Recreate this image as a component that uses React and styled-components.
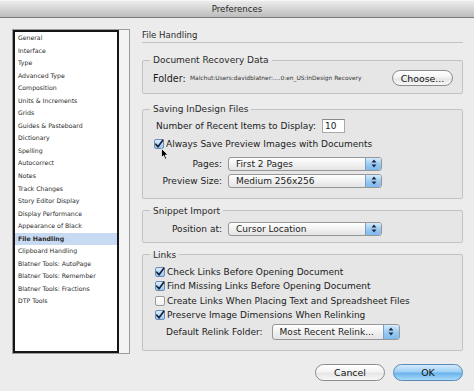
import React from "react";
import styled, { createGlobalStyle } from "styled-components";

const GlobalStyle = createGlobalStyle`
  html, body { margin: 0; padding: 0; background: #ececec; }
  body { font-family: "DejaVu Sans", "Liberation Sans", sans-serif; }
`;

const panes = [
  "General", "Interface", "Type", "Advanced Type", "Composition",
  "Units & Increments", "Grids", "Guides & Pasteboard", "Dictionary",
  "Spelling", "Autocorrect", "Notes", "Track Changes", "Story Editor Display",
  "Display Performance", "Appearance of Black", "File Handling",
  "Clipboard Handling", "Blatner Tools: AutoPage", "Blatner Tools: Remember",
  "Blatner Tools: Fractions", "DTP Tools",
];

export default function App() {
  return (
    <Window>
      <GlobalStyle />
      <TitleBar>Preferences</TitleBar>
      <Body>
        <ListFrame>
          <PaneList>
            {panes.map((p) => (
              <PaneItem key={p} $active={p === "File Handling"}>{p}</PaneItem>
            ))}
          </PaneList>
        </ListFrame>

        <Main>
          <Heading>File Handling</Heading>

          <Group $pt={4} $pb={7}>
            <Legend>Document Recovery Data</Legend>
            <FolderRow>
              <FolderLabel>Folder:</FolderLabel>
              <PathText>Malchut:Users:davidblatner:....0:en_US:InDesign Recovery</PathText>
              <PushButton $w={61} $h={16}>Choose...</PushButton>
            </FolderRow>
          </Group>

          <Group $pt={4} $pb={10} $mt={3}>
            <Legend>Saving InDesign Files</Legend>
            <InlineRow $pl={13} $gap={6}>
              Number of Recent Items to Display:
              <NumberField>10</NumberField>
            </InlineRow>
            <CheckRow $pl={11} $mt={5}>
              <CheckBox checked cursor />
              Always Save Preview Images with Documents
            </CheckRow>
            <FormRow $mt={6}>
              <RightLabel>Pages:</RightLabel>
              <Popup w={154} value="First 2 Pages" />
            </FormRow>
            <FormRow $mt={3}>
              <RightLabel>Preview Size:</RightLabel>
              <Popup w={154} value="Medium 256x256" />
            </FormRow>
          </Group>

          <Group $pt={5} $pb={6}>
            <Legend>Snippet Import</Legend>
            <FormRow>
              <RightLabel>Position at:</RightLabel>
              <Popup w={154} value="Cursor Location" />
            </FormRow>
          </Group>

          <Group $pt={5} $pb={10}>
            <Legend>Links</Legend>
            <CheckRow $pl={12}><CheckBox checked />Check Links Before Opening Document</CheckRow>
            <CheckRow $pl={12} $mt={2}><CheckBox checked />Find Missing Links Before Opening Document</CheckRow>
            <CheckRow $pl={12} $mt={2}><CheckBox />Create Links When Placing Text and Spreadsheet Files</CheckRow>
            <CheckRow $pl={12} $mt={2}><CheckBox checked />Preserve Image Dimensions When Relinking</CheckRow>
            <InlineRow $pl={23} $mt={2} $gap={9}>
              Default Relink Folder:
              <Popup w={128} h={16} value="Most Recent Relink..." />
            </InlineRow>
          </Group>

          <ButtonRow>
            <PushButton $w={70} $h={17}>Cancel</PushButton>
            <PushButton $w={70} $h={17} $default>OK</PushButton>
          </ButtonRow>
        </Main>
      </Body>
    </Window>
  );
}

function CheckBox({ checked, cursor }) {
  return (
    <Box $checked={checked}>
      {checked && (
        <svg width="10" height="10" viewBox="0 0 10 10">
          <path d="M1.8 5.2 L4 7.8 L8.8 1.2" fill="none" stroke="#15233d" strokeWidth="1.7" strokeLinecap="round" strokeLinejoin="round" />
        </svg>
      )}
      {cursor && (
        <Cursor width="8" height="12" viewBox="0 0 8 12">
          <path d="M0.5 0.5 L0.5 9.5 L2.6 7.6 L4.2 11.2 L5.6 10.5 L4.1 7 L7 7 Z" fill="#000" stroke="#fff" strokeWidth="0.7" />
        </Cursor>
      )}
    </Box>
  );
}

function Popup({ w, h = 14, value }) {
  return (
    <PopupBox style={{ width: w, height: h }}>
      <PopupValue>{value}</PopupValue>
      <Stepper>
        <svg width="6" height="9" viewBox="0 0 6 9">
          <path d="M3 0.5 L5.5 3.5 L0.5 3.5 Z M3 8.5 L5.5 5.5 L0.5 5.5 Z" fill="#1d2c44" />
        </svg>
      </Stepper>
    </PopupBox>
  );
}

const Window = styled.div`
  width: 474px;
  height: 391px;
  display: flex;
  flex-direction: column;
  background: #ececec;
  color: #1b1b1b;
  overflow: hidden;
`;

const TitleBar = styled.div`
  height: 18px;
  box-sizing: border-box;
  line-height: 17px;
  text-align: center;
  font-size: 8.6px;
  color: #262626;
  background: linear-gradient(#ececec, #d0d0d0 60%, #bcbcbc);
  border-top: 1px solid #f6f6f6;
  border-bottom: 1px solid #7c7c7c;
`;

const Body = styled.div`
  display: flex;
  gap: 12px;
  padding: 11px 11px 0 12px;
`;

const ListFrame = styled.div`
  width: 118px;
  height: 325px;
  box-sizing: border-box;
  border: 1px solid #9c9c9c;
  background: #f4f4f4;
  display: flex;
`;

const PaneList = styled.div`
  width: 106px;
  height: 100%;
  box-sizing: border-box;
  border: 2px solid #151515;
  background: #fff;
`;

const PaneItem = styled.div`
  height: 12.55px;
  line-height: 12.55px;
  padding-left: 3px;
  font-size: 6.2px;
  white-space: nowrap;
  color: #2a2a2a;
  font-weight: ${(p) => (p.$active ? "bold" : "normal")};
  background: ${(p) => (p.$active ? "#c7daf1" : "transparent")};
`;

const Main = styled.div`
  width: 321px;
  display: flex;
  flex-direction: column;
`;

const Heading = styled.div`
  height: 13px;
  line-height: 13px;
  font-size: 8.6px;
  color: #2a2a2a;
  border-bottom: 1px solid #c3c3c3;
  margin-bottom: 11px;
`;

const Group = styled.fieldset`
  margin: ${(p) => p.$mt ?? 0}px 0 6px 0;
  padding: ${(p) => p.$pt}px 0 ${(p) => p.$pb}px 0;
  border: 1px solid #c2c2c2;
  border-radius: 2px;
  background: #e6e6e6;
  min-width: 0;
  font-size: 9px;
`;

const Legend = styled.legend`
  margin-left: 7px;
  padding: 0 3px;
  font-size: 9px;
  line-height: 12px;
  color: #2a2a2a;
`;

const FolderRow = styled.div`
  display: flex;
  align-items: center;
  height: 16px;
  padding: 0 9px 0 10px;
`;

const FolderLabel = styled.span`
  font-size: 9.6px;
  width: 37px;
`;

const PathText = styled.span`
  flex: 1;
  font-size: 5.9px;
  color: #333;
  white-space: nowrap;
`;

const InlineRow = styled.div`
  display: flex;
  align-items: center;
  gap: ${(p) => p.$gap ?? 3}px;
  padding-left: ${(p) => p.$pl}px;
  margin-top: ${(p) => p.$mt ?? 0}px;
  min-height: 14px;
  white-space: nowrap;
`;

const NumberField = styled.span`
  display: inline-flex;
  align-items: center;
  width: 23px;
  height: 14px;
  box-sizing: border-box;
  padding-left: 2px;
  background: #fff;
  border: 1px solid #a8a8a8;
  border-top-color: #8a8a8a;
`;

const CheckRow = styled.div`
  display: flex;
  align-items: center;
  gap: 2px;
  height: 12.5px;
  padding-left: ${(p) => p.$pl}px;
  margin-top: ${(p) => p.$mt ?? 0}px;
  white-space: nowrap;
`;

const Box = styled.span`
  position: relative;
  width: 10px;
  height: 10px;
  box-sizing: border-box;
  border: 1px solid ${(p) => (p.$checked ? "#6a8db5" : "#9a9a9a")};
  border-radius: 2px;
  background: ${(p) =>
    p.$checked ? "linear-gradient(#dcecfb, #9cc8ef)" : "linear-gradient(#ffffff, #efefef)"};
  display: flex;
  align-items: center;
  justify-content: center;
  flex-shrink: 0;
  svg { overflow: visible; }
`;

const Cursor = styled.svg`
  position: absolute;
  left: 6px;
  top: 8px;
`;

const FormRow = styled.div`
  display: grid;
  grid-template-columns: 79px auto;
  column-gap: 6px;
  align-items: center;
  margin-top: ${(p) => p.$mt ?? 0}px;
`;

const RightLabel = styled.span`
  text-align: right;
  white-space: nowrap;
`;

const PopupBox = styled.div`
  display: flex;
  box-sizing: border-box;
  border: 1px solid #979797;
  border-radius: 3px;
  background: linear-gradient(#ffffff, #f1f1f1 50%, #e4e4e4);
  overflow: hidden;
`;

const PopupValue = styled.span`
  flex: 1;
  display: flex;
  align-items: center;
  padding-left: 7px;
  white-space: nowrap;
`;

const Stepper = styled.span`
  width: 15px;
  display: flex;
  align-items: center;
  justify-content: center;
  border-left: 1px solid #7d9fc6;
  background: linear-gradient(#d6ebfc, #9ccbf2 50%, #7fb9ec);
`;

const PushButton = styled.div`
  width: ${(p) => p.$w}px;
  height: ${(p) => p.$h}px;
  box-sizing: border-box;
  display: flex;
  align-items: center;
  justify-content: center;
  font-size: 9.4px;
  border-radius: 9px;
  border: 1px solid ${(p) => (p.$default ? "#5b89b8" : "#8c8c8c")};
  background: ${(p) =>
    p.$default
      ? "linear-gradient(#d3eafc, #9fd0f6 45%, #6cb4ec 55%, #a6dafb)"
      : "linear-gradient(#ffffff, #f4f4f4 45%, #e6e6e6 55%, #f7f7f7)"};
  color: #111;
  flex-shrink: 0;
`;

const ButtonRow = styled.div`
  display: flex;
  justify-content: flex-end;
  gap: 8px;
  margin-top: 7px;
`;
